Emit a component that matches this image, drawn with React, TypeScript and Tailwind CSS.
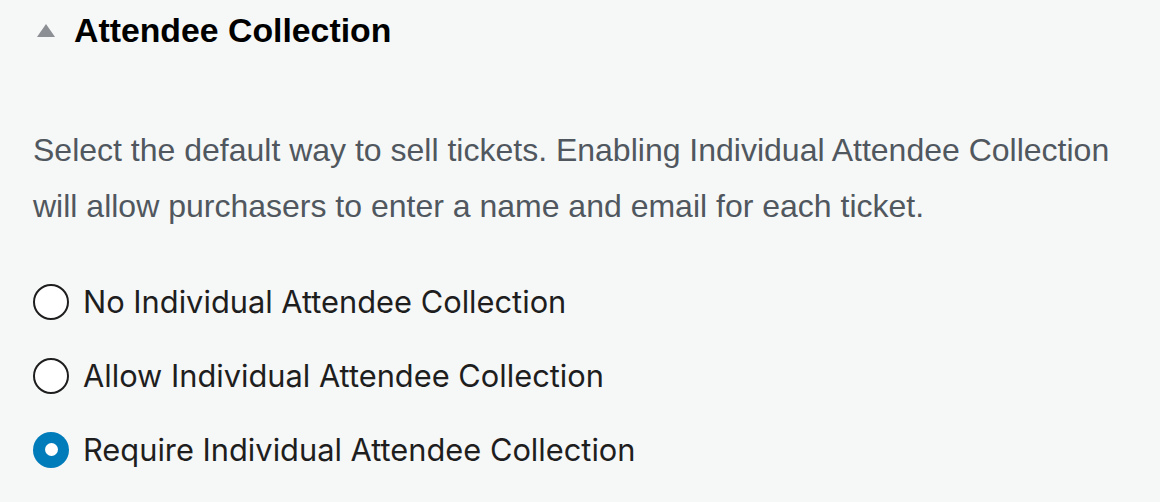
import { useState } from "react";

const options = [
  { id: "none", label: "No Individual Attendee Collection" },
  { id: "allow", label: "Allow Individual Attendee Collection" },
  { id: "require", label: "Require Individual Attendee Collection" },
];

const App = () => {
  const [selected, setSelected] = useState("require");

  return (
    <div className="w-full h-[502px] bg-[#f6f7f7] pl-[33px] overflow-hidden">
      <div className="flex items-center pt-[14px]">
        <svg width="18" height="13" viewBox="0 0 18 13" className="ml-[4px] mr-[19px]">
          <polygon points="9,0 18,13 0,13" fill="#8c8f94" />
        </svg>
        <h2 className="text-[33.8px] leading-none font-bold text-black font-['Liberation_Sans',Arial,sans-serif]">
          Attendee Collection
        </h2>
      </div>

      <p className="mt-[74px] max-w-[1090px] text-[32px] leading-[56px] text-[#50575e] font-['Liberation_Sans',Arial,sans-serif]">
        Select the default way to sell tickets. Enabling Individual Attendee Collection will allow purchasers to enter a
        name and email for each ticket.
      </p>

      <div className="mt-[50px] flex flex-col gap-[38px]">
        {options.map((opt) => {
          const checked = selected === opt.id;
          return (
            <label key={opt.id} className="flex items-center h-[36px] gap-[14px] cursor-pointer" onClick={() => setSelected(opt.id)}>
              {checked ? (
                <span className="w-[36px] h-[36px] rounded-full bg-[#007cba] flex items-center justify-center">
                  <span className="w-[13px] h-[13px] rounded-full bg-white" />
                </span>
              ) : (
                <span className="w-[36px] h-[36px] rounded-full border-2 border-[#1e1e1e] bg-white" />
              )}
              <span className="text-[30.8px] text-[#1e1e1e] font-['Inter',sans-serif]">{opt.label}</span>
            </label>
          );
        })}
      </div>
    </div>
  );
};

export default App;
